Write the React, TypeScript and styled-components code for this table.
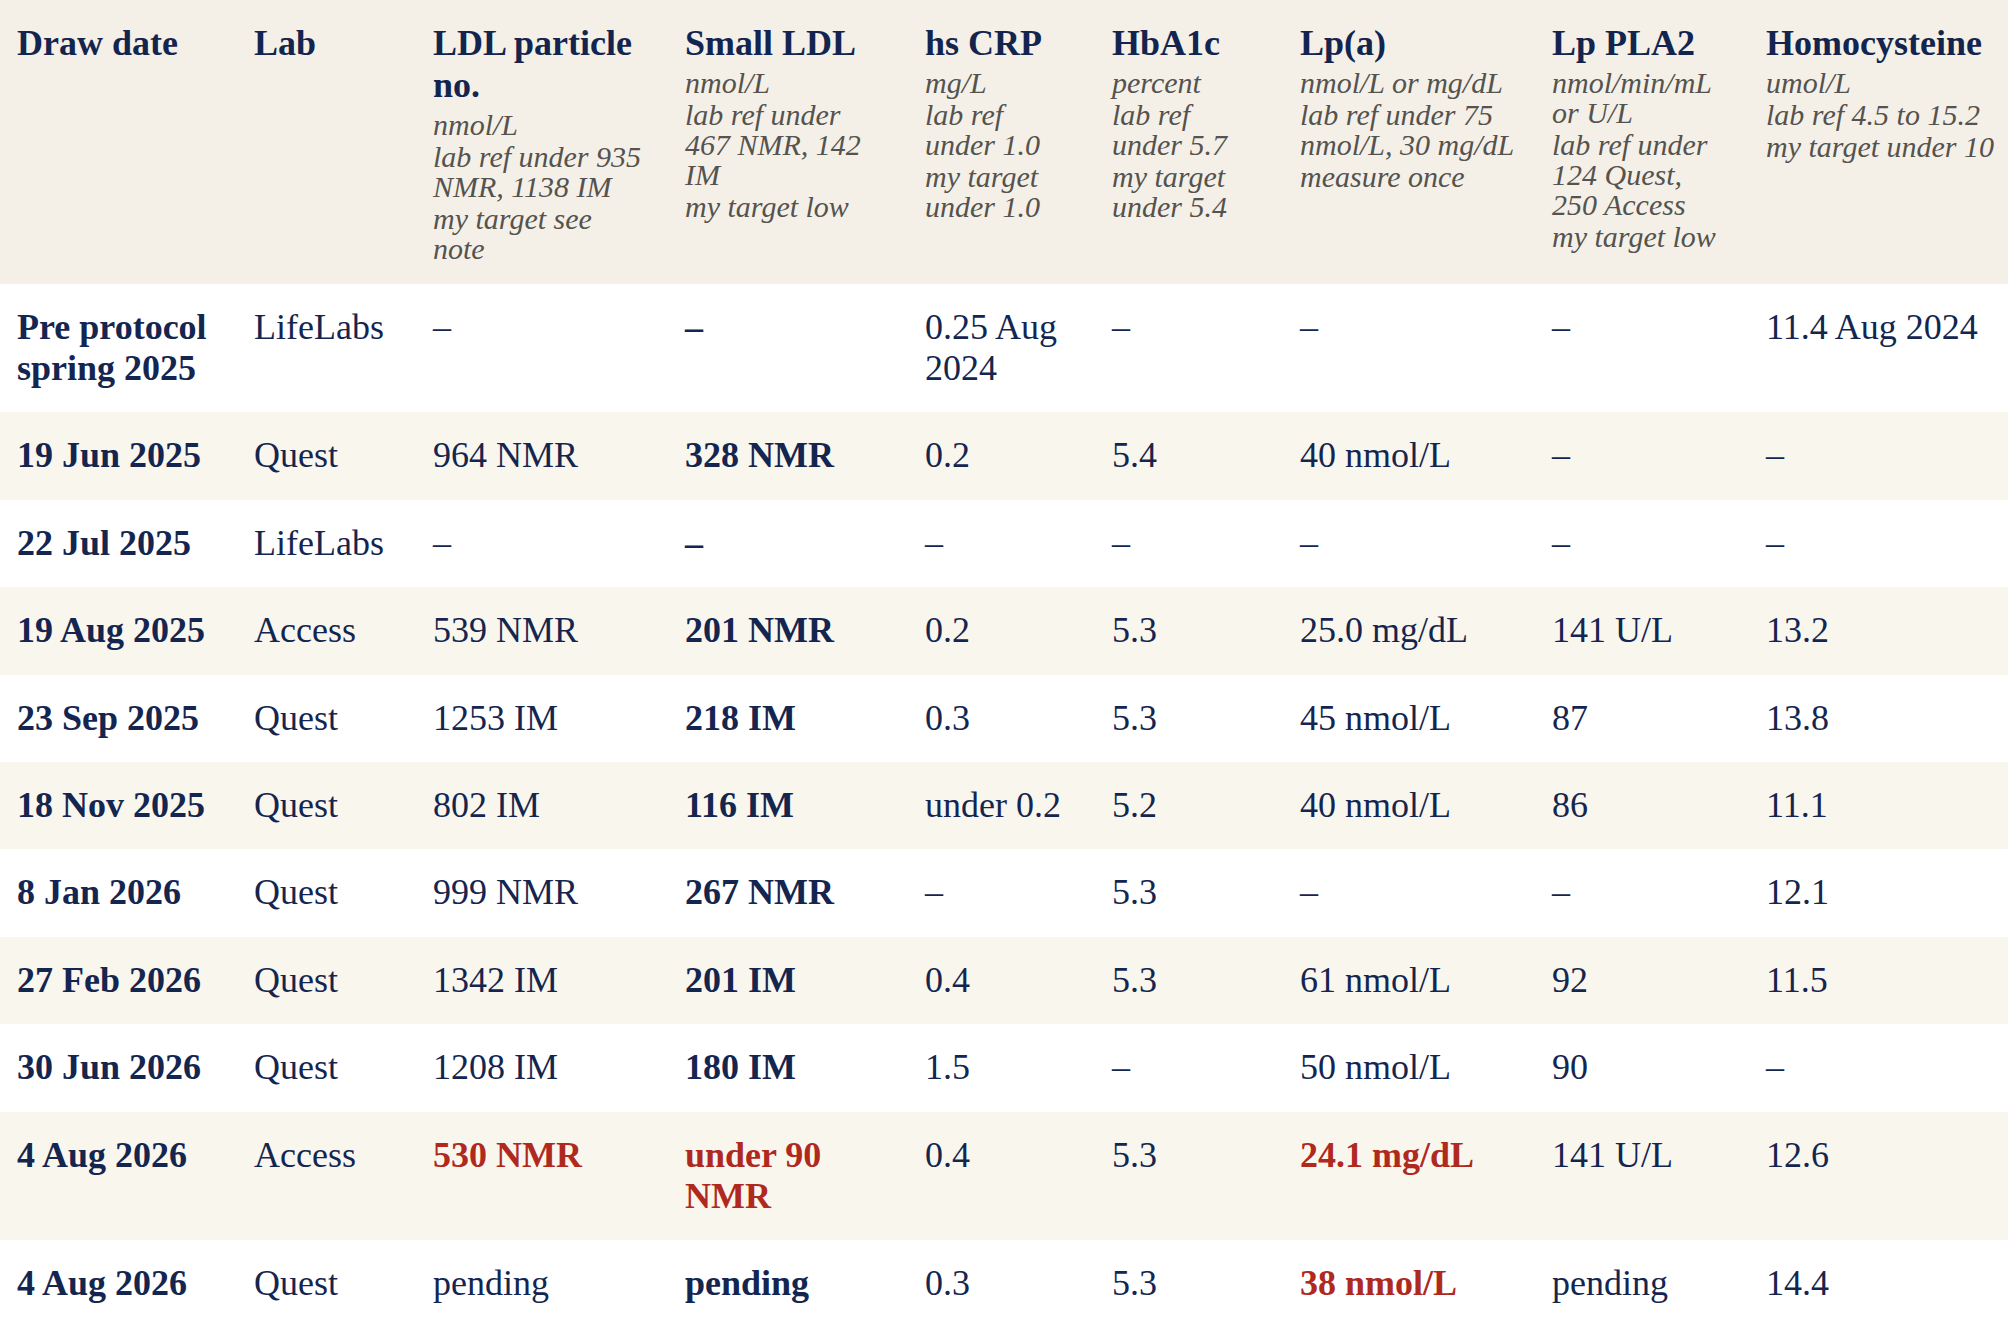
import React from 'react';
import styled, { createGlobalStyle } from 'styled-components';

const GlobalStyle = createGlobalStyle`
  html, body {
    margin: 0;
    padding: 0;
    background: #ffffff;
    overflow: hidden;
  }
  body {
    font-family: "Liberation Serif", "Times New Roman", serif;
    color: #14264f;
  }
`;

const Table = styled.table`
  border-collapse: collapse;
  table-layout: fixed;
  width: 2026px;
`;

const HeadRow = styled.tr`
  background: #f4f0e7;
`;

const Row = styled.tr<{ $shaded: boolean }>`
  background: ${({ $shaded }) => ($shaded ? '#f9f6ee' : '#ffffff')};
`;

const HeadCell = styled.th`
  text-align: left;
  vertical-align: top;
  padding: 22px 19px 19.5px 17px;
  font-weight: 700;
  font-size: 36px;
  line-height: 42px;
  color: #13254f;
`;

const Note = styled.span<{ $first?: boolean }>`
  display: block;
  margin-top: ${({ $first }) => ($first ? '4px' : '2px')};
  font-style: italic;
  font-weight: 400;
  font-size: 30px;
  line-height: 30px;
  color: #55534f;
`;

const Cell = styled.td<{ $bold?: boolean; $flag?: boolean }>`
  vertical-align: top;
  padding: 23px 19px 23px 17px;
  font-size: 36px;
  line-height: 41.4px;
  font-weight: ${({ $bold, $flag }) => ($bold || $flag ? 700 : 400)};
  color: ${({ $flag }) => ($flag ? '#b0291f' : '#14264f')};
`;

type Value = string | { v: string; flag: true };

const columns: { title: string; notes: string[]; width: number }[] = [
  { title: 'Draw date', notes: [], width: 237 },
  { title: 'Lab', notes: [], width: 179 },
  {
    title: 'LDL particle no.',
    notes: ['nmol/L', 'lab ref under 935 NMR, 1138 IM', 'my target see note'],
    width: 252,
  },
  {
    title: 'Small LDL',
    notes: ['nmol/L', 'lab ref under 467 NMR, 142 IM', 'my target low'],
    width: 240,
  },
  { title: 'hs CRP', notes: ['mg/L', 'lab ref under 1.0', 'my target under 1.0'], width: 187 },
  { title: 'HbA1c', notes: ['percent', 'lab ref under 5.7', 'my target under 5.4'], width: 188 },
  {
    title: 'Lp(a)',
    notes: ['nmol/L or mg/dL', 'lab ref under 75 nmol/L, 30 mg/dL', 'measure once'],
    width: 252,
  },
  {
    title: 'Lp PLA2',
    notes: ['nmol/min/mL or U/L', 'lab ref under 124 Quest, 250 Access', 'my target low'],
    width: 214,
  },
  { title: 'Homocysteine', notes: ['umol/L', 'lab ref 4.5 to 15.2', 'my target under 10'], width: 277 },
];

const red = (v: string): Value => ({ v, flag: true });

const rows: Value[][] = [
  ['Pre protocol spring 2025', 'LifeLabs', '–', '–', '0.25 Aug 2024', '–', '–', '–', '11.4 Aug 2024'],
  ['19 Jun 2025', 'Quest', '964 NMR', '328 NMR', '0.2', '5.4', '40 nmol/L', '–', '–'],
  ['22 Jul 2025', 'LifeLabs', '–', '–', '–', '–', '–', '–', '–'],
  ['19 Aug 2025', 'Access', '539 NMR', '201 NMR', '0.2', '5.3', '25.0 mg/dL', '141 U/L', '13.2'],
  ['23 Sep 2025', 'Quest', '1253 IM', '218 IM', '0.3', '5.3', '45 nmol/L', '87', '13.8'],
  ['18 Nov 2025', 'Quest', '802 IM', '116 IM', 'under 0.2', '5.2', '40 nmol/L', '86', '11.1'],
  ['8 Jan 2026', 'Quest', '999 NMR', '267 NMR', '–', '5.3', '–', '–', '12.1'],
  ['27 Feb 2026', 'Quest', '1342 IM', '201 IM', '0.4', '5.3', '61 nmol/L', '92', '11.5'],
  ['30 Jun 2026', 'Quest', '1208 IM', '180 IM', '1.5', '–', '50 nmol/L', '90', '–'],
  ['4 Aug 2026', 'Access', red('530 NMR'), red('under 90 NMR'), '0.4', '5.3', red('24.1 mg/dL'), '141 U/L', '12.6'],
  ['4 Aug 2026', 'Quest', 'pending', 'pending', '0.3', '5.3', red('38 nmol/L'), 'pending', '14.4'],
];

// date column and small LDL column are set in bold
const boldCols = [0, 3];

const App = () => {
  return (
    <>
      <GlobalStyle />
      <Table>
        <colgroup>
          {columns.map((c) => (
            <col key={c.title} style={{ width: c.width }} />
          ))}
        </colgroup>
        <thead>
          <HeadRow>
            {columns.map((c) => (
              <HeadCell key={c.title}>
                {c.title}
                {c.notes.map((n, i) => (
                  <Note key={n} $first={i === 0}>
                    {n}
                  </Note>
                ))}
              </HeadCell>
            ))}
          </HeadRow>
        </thead>
        <tbody>
          {rows.map((r, ri) => (
            <Row key={ri} $shaded={ri % 2 === 1}>
              {r.map((val, ci) => {
                const isFlag = typeof val !== 'string';
                const text = typeof val === 'string' ? val : val.v;
                return (
                  <Cell key={ci} $bold={boldCols.includes(ci)} $flag={isFlag}>
                    {text}
                  </Cell>
                );
              })}
            </Row>
          ))}
        </tbody>
      </Table>
    </>
  );
};

export default App;
